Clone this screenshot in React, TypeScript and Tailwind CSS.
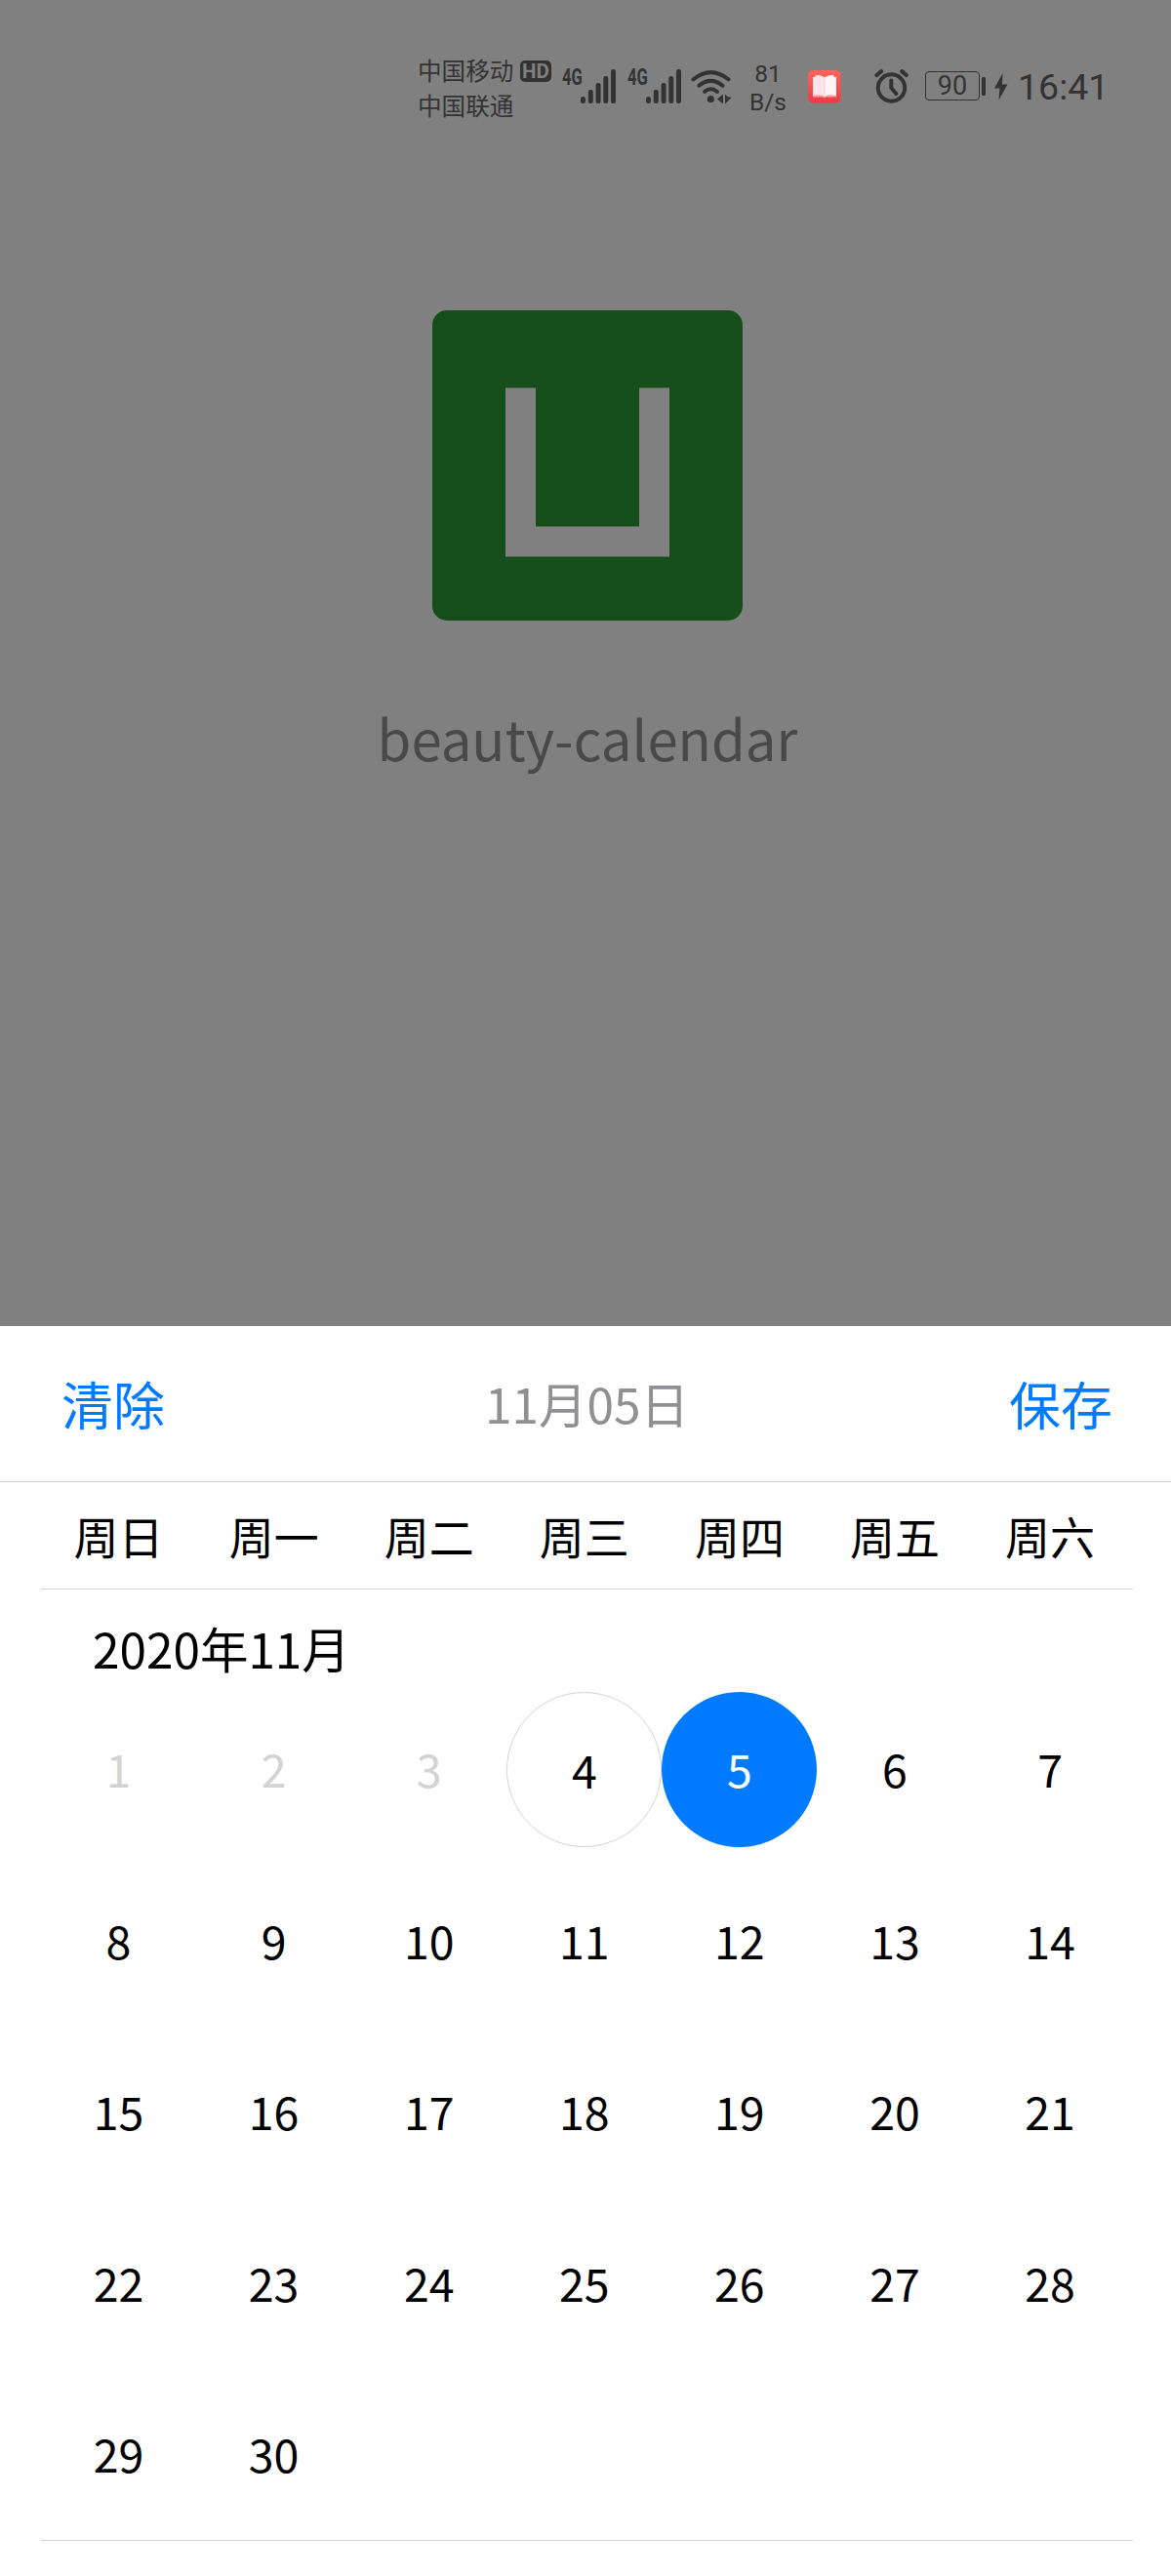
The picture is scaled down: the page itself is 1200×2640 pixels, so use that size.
import React from "react";

const INK = "#333333";
const WEEKDAYS = ["周日", "周一", "周二", "周三", "周四", "周五", "周六"];
const DAYS = Array.from({ length: 30 }, (_, i) => i + 1);
const TODAY = 4;
const SELECTED = 5;

function Signal() {
  return (
    <div className="flex h-[60px] w-[56px] shrink-0">
      <span className="mt-[9px] w-[19px] origin-left scale-x-[0.72] font-[Roboto] text-[23px] leading-[25px] font-bold">4G</span>
      <svg width="37" height="60" viewBox="0 0 37 60" fill={INK}>
        <rect x="0" y="41" width="5" height="7" rx="2.5" />
        <rect x="7.8" y="34" width="5" height="14" rx="2.2" />
        <rect x="15.6" y="27" width="5" height="21" rx="2.2" />
        <rect x="23.3" y="20" width="5" height="28" rx="2.2" />
        <rect x="31" y="13" width="5" height="35" rx="2.2" />
      </svg>
    </div>
  );
}

function Wifi() {
  return (
    <svg className="ml-[9px] shrink-0" width="42" height="60" viewBox="0 0 42 60" fill="none" stroke={INK} strokeWidth="4" strokeLinecap="round">
      <path d="M2.5 23.3Q20.5 9 38.5 23.3" />
      <path d="M8.3 29.8Q20.5 20 32.5 29.8" />
      <path d="M14 36Q20.5 30.5 27 36" />
      <circle cx="20.3" cy="43.5" r="3.6" fill={INK} stroke="none" />
      <path d="M33 38.5v10l-6-5zM35 38.5v10l6.500-6.500l-4-1z" fill={INK} stroke="none" />
    </svg>
  );
}

function ReaderApp() {
  return (
    <svg className="ml-[21px] shrink-0" width="34" height="60" viewBox="0 0 34 60">
      <defs>
        <linearGradient id="reader" x1="0" y1="0" x2="0" y2="1">
          <stop offset="0" stopColor="#fb655f" />
          <stop offset="1" stopColor="#ec3b44" />
        </linearGradient>
      </defs>
      <rect x="0" y="14" width="33.5" height="33.5" rx="5" fill="url(#reader)" />
      <path d="M5 21h24v20.5H5z" fill="#f9a0a4" />
      <path d="M7.5 19q6-.5 9.3 2.3v19.2q-4-2-11.8-.5V21h2.5z" fill="#ffe3ea" />
      <path d="M26.5 19q-6-.5-9.3 2.3v19.2q4-2 11.8-.5V21h-2.5z" fill="#fff3f6" />
      <path d="M16.2 40h1.4v1.8h-1.4z" fill="#fff" />
    </svg>
  );
}

function Alarm() {
  return (
    <svg className="ml-[34px] shrink-0" width="36" height="60" viewBox="0 0 36 60" fill="none" stroke={INK} strokeLinecap="round">
      <circle cx="17.5" cy="32" r="13.7" strokeWidth="4" />
      <path d="M17.3 24.5V32l5 6" strokeWidth="4" strokeLinejoin="round" />
      <path d="M2.5 19L7 15.2M28.3 15.2L32.7 19" strokeWidth="4.2" />
    </svg>
  );
}

function StatusBar() {
  return (
    <div className="flex h-[118px] items-start pt-[58px] pl-[428px] text-[#333333]">
      <div className="w-[98px] shrink-0 text-[24.6px] leading-[36px] whitespace-nowrap">
        <div className="-mt-[5px] h-[36px]">中国移动</div>
        <div className="h-[36px]">中国联通</div>
      </div>
      <div className="mt-[4px] ml-[7px] flex h-[22px] w-[32px] shrink-0 items-center justify-center rounded-[5px] bg-[#333333] font-[Roboto] text-[20.5px] leading-none font-bold text-[#808080]">
        HD
      </div>
      <div className="ml-[11px] flex shrink-0 gap-[11px]">
        <Signal />
        <Signal />
      </div>
      <Wifi />
      <div className="mt-[3px] ml-[17px] w-[40px] shrink-0 text-center font-[Roboto] text-[24.5px] leading-[29px]">
        <div>81</div>
        <div>B/s</div>
      </div>
      <ReaderApp />
      <Alarm />
      <div className="mt-[15px] ml-[16px] flex h-[30px] w-[56px] shrink-0 items-center justify-center rounded-[4px] border-[1.5px] border-[#333333] font-[Roboto] text-[27px] leading-none">
        90
      </div>
      <div className="mt-[21px] ml-[2px] h-[19px] w-[4px] shrink-0 rounded-[1.5px] bg-[#333333]" />
      <svg className="ml-[9px] shrink-0" width="14" height="60" viewBox="0 0 14 60" fill={INK}>
        <path d="M8.5 17L0 32.5h5.5L4.5 44.5 13.5 28.5H8z" />
      </svg>
      <div className="mt-[9px] ml-[10px] font-[Roboto] text-[37.5px] leading-[44px]">16:41</div>
    </div>
  );
}

function Day({ day }: { day: number }) {
  const tone =
    day === SELECTED
      ? "bg-[#007aff] pb-[3px] text-white"
      : day === TODAY
        ? "border border-[#d3d3d3] pb-[1px] text-black"
        : day < TODAY
          ? "pb-[3px] text-[#d3d3d3]"
          : "pb-[3px] text-black";
  return (
    <div className="h-[175.5px]">
      <div className={`flex size-[159px] items-center justify-center rounded-full ${tone}`}>{day}</div>
    </div>
  );
}

export default function App() {
  return (
    <div className="flex h-[2640px] w-[1200px] flex-col overflow-hidden bg-[#808080] font-['Noto_Sans_CJK_SC',sans-serif]">
      <div className="h-[1359px] shrink-0">
        <StatusBar />
        <div className="flex flex-col items-center pt-[200px] pl-[4px]">
          <svg width="318" height="318" viewBox="0 0 318 318">
            <rect width="318" height="318" rx="15" fill="#154d1b" />
            <path d="M75 79.5h31v142h106v-142h31v173H75z" fill="#808080" />
          </svg>
          <div className="mt-[75px] text-[56.3px] leading-[90px] text-[#49494a]">beauty-calendar</div>
        </div>
      </div>

      <div className="flex flex-1 flex-col bg-white">
        <div className="flex h-[160px] shrink-0 items-center justify-between border-b border-[#d3d3d3] pr-[60px] pl-[63px] text-[53px] text-[#007aff]">
          <span>清除</span>
          <span className="text-[49.5px] text-[#8f8f94]">11月05日</span>
          <span>保存</span>
        </div>
        <div className="mr-[39px] ml-[42px] flex flex-col">
          <div className="flex h-[110px] items-center border-b border-[#d3d3d3] text-[46px] text-black">
            {WEEKDAYS.map((name) => (
              <div key={name} className="w-[159.1px] shrink-0 pb-[1px] text-center">{name}</div>
            ))}
          </div>
          <div className="flex h-[105px] items-center pt-[15px] pl-[53px] text-[49.5px] text-black">2020年11月</div>
          <div className="grid h-[870px] grid-cols-[repeat(7,159.1px)] content-start border-b border-[#d3d3d3] text-[46.5px]">
            {DAYS.map((day) => (
              <Day key={day} day={day} />
            ))}
          </div>
        </div>
      </div>
    </div>
  );
}
